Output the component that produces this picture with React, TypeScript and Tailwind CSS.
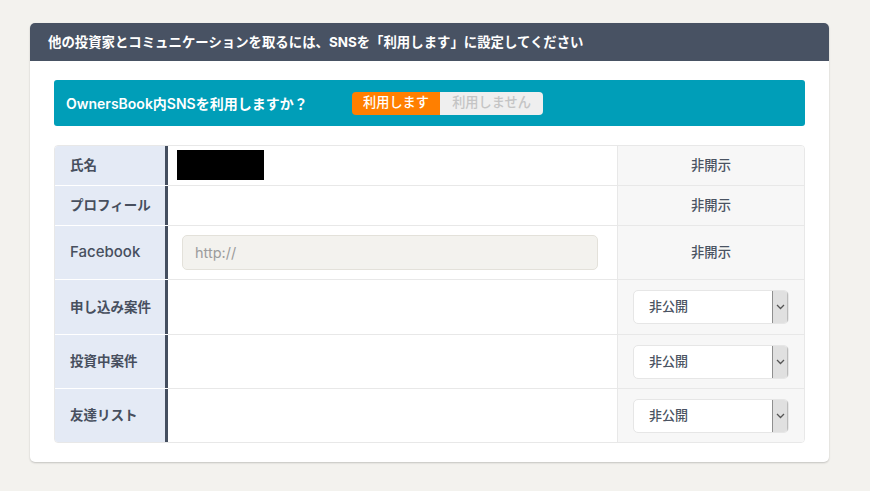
const font = { fontFamily: '"Inter", "Noto Sans CJK JP", sans-serif' }

function PublicSelect() {
  return (
    <div className="flex h-[34px] w-[156px] overflow-hidden rounded-[5px] border border-[#e6e6e6] bg-white">
      <div className="flex flex-1 items-center pl-[15px] text-[13px] font-medium text-[#4a5362]">非公開</div>
      <div className="flex w-[16px] items-center justify-center border-l border-[#8f8f8f] bg-[#e0e0e0] border-r border-r-[#bbbbbb]">
        <svg width="9" height="6" viewBox="0 0 9 6" fill="none" stroke="#555" strokeWidth="1.3">
          <path d="M1 1l3.5 3.5L8 1" />
        </svg>
      </div>
    </div>
  )
}

function Row({
  label,
  height,
  last,
  children,
  right,
}: {
  label: React.ReactNode
  height: string
  last?: boolean
  children?: React.ReactNode
  right: React.ReactNode
}) {
  return (
    <div className={`flex ${height} ${last ? "" : "border-b border-[#e8e8e8]"}`}>
      <div className={`flex w-[113px] shrink-0 items-center border-r-[3px] border-[#454f60] bg-[#e4eaf5] pl-[15px] text-[13.5px] font-semibold text-[#474f5e] ${last ? "" : "shadow-[0_1px_0_#ffffff]"}`}>
        {label}
      </div>
      <div className="flex min-w-0 flex-1 items-center">{children}</div>
      <div className="flex w-[187px] shrink-0 items-center justify-center border-l border-[#e8e8e8] bg-[#f7f7f7]">
        {right}
      </div>
    </div>
  )
}

const Hidden = () => <span className="pt-[1px] text-[13.3px] font-medium text-[#4a5362]">非開示</span>

export default function App() {
  return (
    <div style={font} className="h-[491px] w-[870px] overflow-hidden bg-[#f3f2ee] pl-[30px] pt-[23px]">
      <div className="h-[439px] w-[799px] rounded-[5px] bg-white shadow-[0_1px_2px_rgba(0,0,0,0.2)]">
        <div className="flex h-[38px] items-center rounded-t-[5px] bg-[#485263] pl-[18px] text-[13.4px] font-bold text-white">
          他の投資家とコミュニケーションを取るには、SNSを「利用します」に設定してください
        </div>
        <div className="px-[24px] pt-[19px]">
          <div className="flex h-[46px] items-center rounded-[3px] bg-[#009eb8] pl-[12px]">
            <span className="w-[286px] text-[14px] font-semibold text-white">OwnersBook内SNSを利用しますか？</span>
            <div className="flex text-[13.2px]">
              <span className="flex h-[23px] w-[88px] items-center justify-center rounded-l-[4px] bg-[#ff7f00] font-medium text-white">利用します</span>
              <span className="flex h-[23px] w-[103px] items-center justify-center rounded-r-[4px] bg-[#efefef] font-medium text-[#c4c4c4]">利用しません</span>
            </div>
          </div>
          <div className="mt-[19px] overflow-hidden rounded-[4px] border border-[#e8e8e8]">
            <Row label="氏名" height="h-[40px]" right={<Hidden />}>
              <div className="mb-[1px] ml-[9px] h-[30px] w-[87px] bg-black" />
            </Row>
            <Row label="プロフィール" height="h-[40px]" right={<Hidden />} />
            <Row label={<span className="text-[15px] font-medium">Facebook</span>} height="h-[54px]" right={<Hidden />}>
              <div className="ml-[14px] flex h-[35px] w-[416px] items-center rounded-[5px] border border-[#e3e1da] bg-[#f3f2ee] pl-[12px] text-[14.5px] text-[#9c9c9c]">
                http://
              </div>
            </Row>
            <Row label="申し込み案件" height="h-[55px]" right={<PublicSelect />} />
            <Row label="投資中案件" height="h-[54px]" right={<PublicSelect />} />
            <Row label="友達リスト" height="h-[53px]" last right={<PublicSelect />} />
          </div>
        </div>
      </div>
    </div>
  )
}
